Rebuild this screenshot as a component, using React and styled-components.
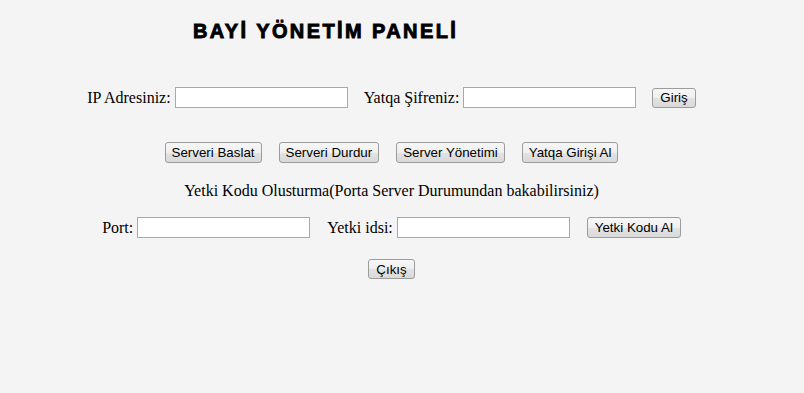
import React from "react";
import styled, { createGlobalStyle } from "styled-components";

const Global = createGlobalStyle`
  html, body { margin: 0; padding: 0; background: #f4f4f4; }
  body { font-family: "Liberation Serif", "Times New Roman", serif; font-size: 16px; color: #000; }
`;

const Page = styled.div`
  width: 804px;
  min-height: 393px;
  display: flex;
  flex-direction: column;
`;

const Title = styled.h2`
  margin: 19px 0 0 0;
  padding-left: 193px;
  font-family: "Liberation Sans", Arial, sans-serif;
  font-weight: bold;
  font-size: 20px;
  line-height: 24px;
  letter-spacing: 2.4px;
  -webkit-text-stroke: 0.9px #000;
`;

const Row = styled.div`
  display: flex;
  justify-content: center;
  align-items: center;
  gap: ${(p) => p.$gap || 16}px;
  margin-top: ${(p) => p.$top}px;
  padding-right: 21px;
  height: ${(p) => p.$h || 21}px;
`;

const Field = styled.label`
  display: flex;
  align-items: center;
  gap: 4px;
  font-size: 16px;
  line-height: 18px;
`;

const Input = styled.input`
  box-sizing: border-box;
  width: 173px;
  height: 21px;
  margin: 0;
  padding: 1px 2px;
  border: 1px solid #a9a9a9;
  background: #fff;
  border-radius: 0;
  outline: none;
  font-family: "Liberation Sans", Arial, sans-serif;
  font-size: 13.33px;
`;

const Button = styled.button`
  box-sizing: border-box;
  height: ${(p) => p.$h || 21}px;
  margin: 0;
  padding: 0 ${(p) => p.$px || 6}px;
  border: 1px solid #9c9c9c;
  border-radius: 3px;
  background: linear-gradient(#f7f7f7 0%, #efefef 50%, #e3e3e3 51%, #d9d9d9 100%);
  font-family: "Liberation Sans", Arial, sans-serif;
  font-size: 13.33px;
  color: #000;
  line-height: 15px;
  cursor: pointer;
`;

const Info = styled.p`
  margin: 0;
  font-size: 16px;
  line-height: 18px;
`;

export default function App() {
  return (
    <>
      <Global />
      <Page>
        <Title>BAYİ YÖNETİM PANELİ</Title>
        <Row $top={44}>
          <Field>
            IP Adresiniz:
            <Input type="text" />
          </Field>
          <Field>
            Yatqa Şifreniz:
            <Input type="password" />
          </Field>
          <Button $h={20} $px={7}>Giriş</Button>
        </Row>
        <Row $top={34} $gap={17}>
          <Button>Serveri Baslat</Button>
          <Button>Serveri Durdur</Button>
          <Button>Server Yönetimi</Button>
          <Button>Yatqa Girişi Al</Button>
        </Row>
        <Row $top={19} $h={18}>
          <Info>Yetki Kodu Olusturma(Porta Server Durumundan bakabilirsiniz)</Info>
        </Row>
        <Row $top={17} $gap={17}>
          <Field>
            Port:
            <Input type="text" />
          </Field>
          <Field>
            Yetki idsi:
            <Input type="text" />
          </Field>
          <Button $px={7}>Yetki Kodu Al</Button>
        </Row>
        <Row $top={21} $h={20}>
          <Button $h={20} $px={7}>Çıkış</Button>
        </Row>
      </Page>
    </>
  );
}
